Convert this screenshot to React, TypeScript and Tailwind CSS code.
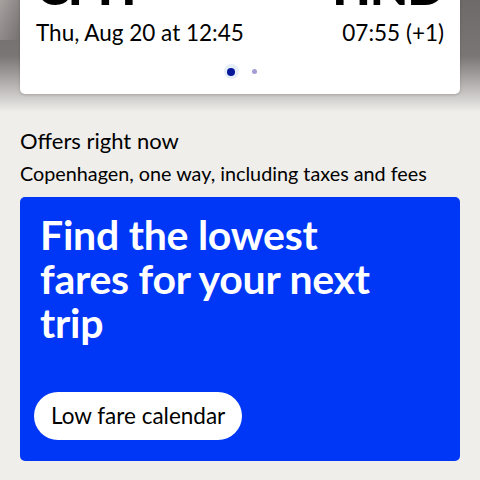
const DOTS = [true, false];

export default function App() {
  return (
    <div
      className="relative w-[480px] h-[480px] overflow-hidden bg-[#efeeeb] text-black"
      style={{ fontFamily: "Lato, 'Noto Sans', sans-serif" }}
    >
      {/* photo strip behind the flight card */}
      <div className="absolute inset-x-0 top-0 h-[112px] bg-gradient-to-b from-[#6f6a6a] via-[#7b7676] to-[#efeeeb]">
        <div className="absolute left-0 top-0 w-[20px] h-[40px] bg-gradient-to-br from-[#a7a2a0] to-transparent" />
      </div>

      <div className="relative px-5">
        {/* Flight card */}
        <div className="-mt-[38px] rounded-[5px] bg-white px-4 pb-[15px] shadow-[0_1px_3px_rgba(0,0,0,0.18)]">
          <div className="flex justify-between text-[50px] font-black leading-[48px] tracking-tight">
            <span>CPH</span>
            <span>HND</span>
          </div>
          <div className="mt-[9px] flex justify-between text-[22.5px] leading-[28px]">
            <span>Thu, Aug 20 at 12:45</span>
            <span>07:55 (+1)</span>
          </div>
          <div className="mt-[17px] flex items-center justify-center gap-[13px]">
            {DOTS.map((active, i) =>
              active ? (
                <span key={i} className="flex h-[15px] w-[15px] items-center justify-center rounded-full bg-[#e5eefa]">
                  <span className="h-[8px] w-[8px] rounded-full bg-[#05189c]" />
                </span>
              ) : (
                <span key={i} className="h-[5px] w-[5px] rounded-full bg-[#a29dd3]" />
              )
            )}
          </div>
        </div>

        {/* Offers */}
        <h2 className="mt-[33px] text-[22px] leading-[28px]">Offers right now</h2>
        <p className="mt-[6px] text-[19.8px] leading-[24px]">Copenhagen, one way, including taxes and fees</p>

        <div className="mt-[12px] h-[264px] rounded-[5px] bg-[#0037f6] px-5 pt-[16px]">
          <h3 className="text-[41px] font-bold leading-[44px] tracking-[-0.25px] text-white">
            Find the lowest
            <br />
            fares for your next
            <br />
            trip
          </h3>
          <button className="mt-[47px] -ml-[6px] h-[48px] rounded-full bg-white px-[17px] text-[22.5px] text-black">
            Low fare calendar
          </button>
        </div>
      </div>
    </div>
  );
}
